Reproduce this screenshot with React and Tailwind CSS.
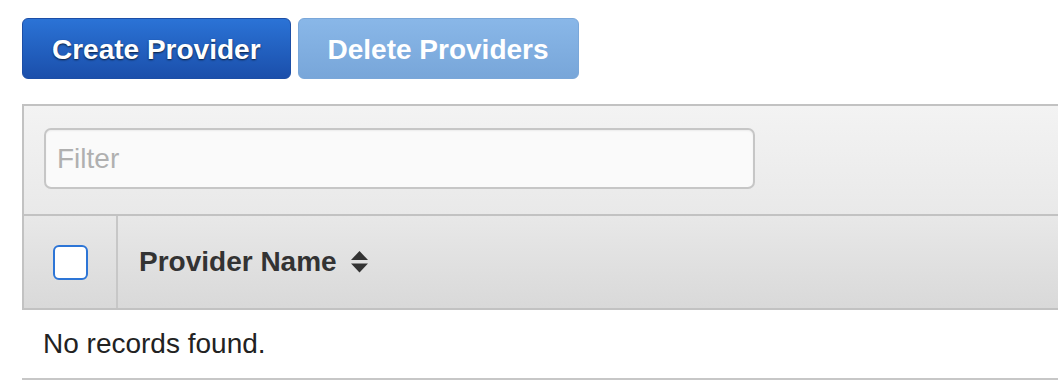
export default function App() {
  const font = { fontFamily: '"Liberation Sans", Arial, sans-serif' };
  return (
    <div className="w-[1058px] h-[384px] overflow-hidden bg-white" style={font}>
      <div className="flex gap-[7px] pl-[22px] pt-[18px]">
        <button className="h-[61px] px-[29px] pt-[2px] rounded-[6px] border border-[#1c4ea6] bg-gradient-to-b from-[#2b73d6] to-[#1b4fab] text-white font-bold text-[28px] leading-none [text-shadow:0_1px_2px_rgba(0,0,0,0.7)]">
          Create Provider
        </button>
        <button className="h-[61px] px-[29px] pt-[2px] rounded-[6px] border border-[#7aa7d9] bg-gradient-to-b from-[#89b7e8] to-[#78a6d9] text-white font-bold text-[28px] leading-none">
          Delete Providers
        </button>
      </div>
      <div className="mt-[25px] ml-[22px] w-[1100px]">
        <div className="border-2 border-[#c2c2c2] bg-gradient-to-b from-[#f3f3f3] to-[#e9e9e9] pt-[22px] pb-[25px] pl-[20px]">
          <div className="w-[711px] h-[61px] rounded-[7px] border-2 border-[#c6c6c6] bg-[#fafafa] flex items-center pl-[11px] shadow-[inset_0_1px_2px_rgba(0,0,0,0.06)]">
            <span className="text-[28px] text-[#b0b0b0] leading-none">Filter</span>
          </div>
        </div>
        <div className="flex h-[94px] border-2 border-t-0 border-[#c2c2c2] bg-gradient-to-b from-[#e8e8e8] to-[#d9d9d9]">
          <div className="w-[94px] flex items-center justify-center border-r-2 border-[#c7c7c7]">
            <div className="w-[35px] h-[35px] rounded-[6px] border-2 border-[#2d75d6] bg-white" />
          </div>
          <div className="flex items-center pl-[21px] gap-[14px]">
            <span className="text-[28px] font-bold text-[#333333] leading-none">Provider Name</span>
            <svg width="17" height="22" viewBox="0 0 17 22">
              <path d="M8.5 0 L17 9 L0 9 Z" fill="#333333" />
              <path d="M0 12.5 L17 12.5 L8.5 21.5 Z" fill="#333333" />
            </svg>
          </div>
        </div>
        <div className="h-[70px] flex items-center pl-[21px] border-b-2 border-[#c7c7c7]">
          <span className="text-[28px] text-[#222222] leading-none">No records found.</span>
        </div>
      </div>
    </div>
  );
}
